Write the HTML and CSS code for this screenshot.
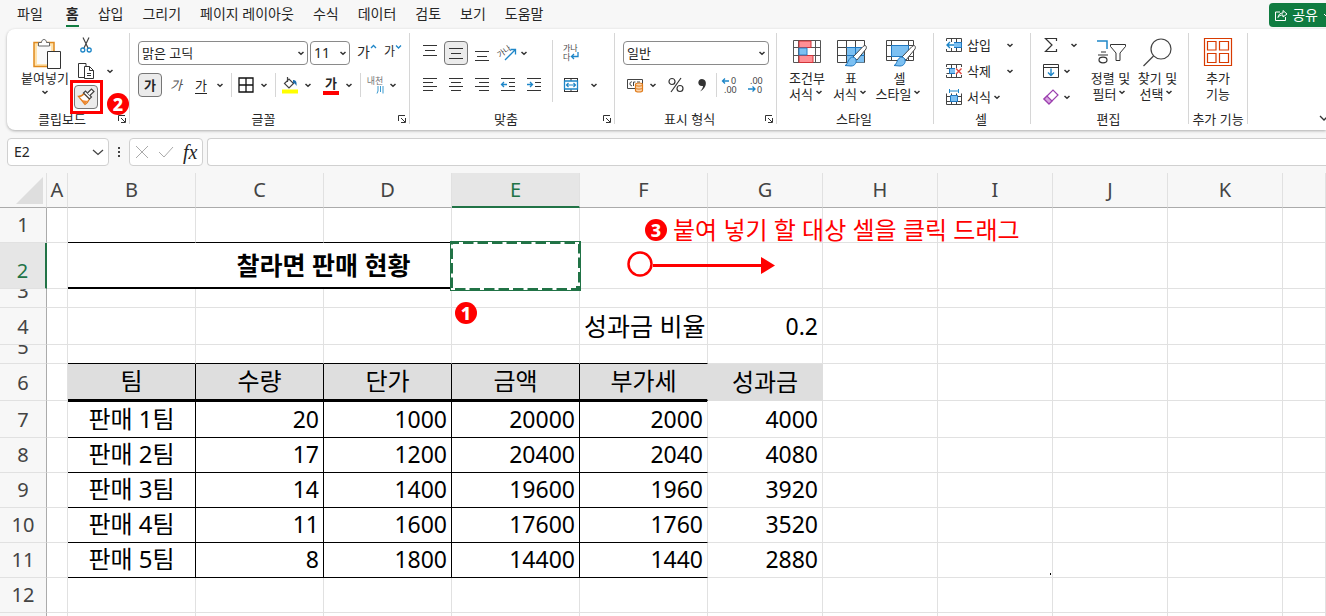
FILE: index.html
```html
<!DOCTYPE html>
<html lang="ko">

<head>
    <meta charset="UTF-8">
    <title>Excel</title>
    <link rel="stylesheet" href="styles.css">
</head>

<body>
    <svg class="symbols">
        <symbol id="chev" viewBox="0 0 12 12"><path d="M3.5 5L6 7.3L8.5 5" fill="none" stroke="#333" stroke-width="1.5"/></symbol>
        <symbol id="launch" viewBox="0 0 10 10"><path d="M1.5 7V1.5H8M4 4L8 8M8.5 4V8.5H4" fill="none" stroke="#333"/></symbol>
    </svg>

    <nav class="menu">
        <a href="#">파일</a>
        <a href="#" class="active">홈</a>
        <a href="#">삽입</a>
        <a href="#">그리기</a>
        <a href="#">페이지 레이아웃</a>
        <a href="#">수식</a>
        <a href="#">데이터</a>
        <a href="#">검토</a>
        <a href="#">보기</a>
        <a href="#">도움말</a>
        <button class="share">
            <svg width="14" height="14" viewBox="0 0 14 14"><path d="M6 4H1.5V12.5H11.5V9M4 9.5C4.5 6.5 6 5 9 5V2.5L13 6L9 9V7C6.500 7 5 7.500 4 9.500Z" fill="none" stroke="#fff"/></svg>
            공유
            <svg width="12" height="12" viewBox="0 0 12 12"><path d="M2 5L5 8L8 5" fill="none" stroke="#fff"/></svg>
        </button>
    </nav>

    <div class="ribbon">
        <!-- clipboard -->
        <section class="group clipboard">
            <div class="tools">
                <button class="big">
                    <svg width="34" height="32" viewBox="-4 0 34 32">
                        <path d="M2 4.500H22V28.500H2Z" fill="#ffe2ac" stroke="#e08a1e" stroke-width="1.500"/>
                        <path d="M5 8H19V26H5Z" fill="#fafafa"/>
                        <path d="M6.500 8V4.500H9.500C9.500 0.500 14.500 0.500 14.500 4.500H17.500V8Z" fill="#fff" stroke="#666"/>
                        <path d="M15.500 13.500H28.500V30.500H15.500Z" fill="#fff" stroke="#333"/>
                    </svg>
                    <span>붙여넣기</span>
                    <svg class="chev"><use href="#chev"/></svg>
                </button>
                <div class="stack">
                    <button class="tool" aria-label="잘라내기">
                        <svg width="18" height="18" viewBox="0 0 18 18"><path d="M6 1.500L11.500 13M12 1.500L6.500 13" fill="none" stroke="#444" stroke-width="1.200"/><circle cx="5.800" cy="14" r="2" fill="none" stroke="#1e86c8" stroke-width="1.300"/><circle cx="12.200" cy="14" r="2" fill="none" stroke="#1e86c8" stroke-width="1.300"/></svg>
                    </button>
                    <div class="row">
                        <button class="tool" aria-label="복사">
                            <svg width="18" height="18" viewBox="0 0 18 18"><path d="M7 15.500H1.500V1.500H9V4" fill="none" stroke="#333"/><path d="M7.500 4.500H12.500L16.500 8.500V16.500H7.500ZM12.500 4.500V8.500H16.500M10 11.500H14M10 13.500H14" fill="#fff" stroke="#333"/></svg>
                        </button>
                        <svg class="chev"><use href="#chev"/></svg>
                    </div>
                    <div class="painter">
                        <button class="tool on" aria-label="서식 복사">
                            <svg width="18" height="18" viewBox="0 0 18 18"><path d="M1.500 8.500C4 8.500 5.500 7.500 7 5.500L12.500 11C11.500 13 10.500 15 8 16.500Z" fill="#fff" stroke="#e07b1a" stroke-width="1.300"/><path d="M3 10.500C6 12.500 8 13 11 12.500L8 16Z" fill="#ef8a35"/><path d="M6.500 5L8.500 3L14.500 9L12.500 11Z" fill="#fff" stroke="#444" stroke-width="1.200"/><path d="M10.500 5L14.500 1L17 3.500L12.800 7.500" fill="#fff" stroke="#444" stroke-width="1.200"/></svg>
                        </button>
                        <span class="frame"></span>
                        <span class="badge">2</span>
                    </div>
                </div>
            </div>
            <div class="caption"><span>클립보드</span><svg class="launch"><use href="#launch"/></svg></div>
        </section>

        <!-- font -->
        <section class="group font">
            <div class="tools rows">
                <div class="row">
                    <span class="pick family"><select aria-label="글꼴"><option>맑은 고딕</option></select><svg class="chev"><use href="#chev"/></svg></span>
                    <span class="pick size"><select aria-label="글꼴 크기"><option>11</option></select><svg class="chev"><use href="#chev"/></svg></span>
                    <button class="tool step" aria-label="글꼴 크기 크게">가<svg width="7" height="6" viewBox="0 0 7 6"><path d="M1 4L3.500 1.500L6 4" fill="none" stroke="#1e86c8" stroke-width="1.300"/></svg></button>
                    <button class="tool step small" aria-label="글꼴 크기 작게">가<svg width="7" height="6" viewBox="0 0 7 6"><path d="M1 1.500L3.500 4L6 1.500" fill="none" stroke="#1e86c8" stroke-width="1.300"/></svg></button>
                </div>
                <div class="row">
                    <button class="tool on bold" aria-label="굵게">가</button>
                    <button class="tool italic" aria-label="기울임꼴">가</button>
                    <button class="tool underline" aria-label="밑줄">가</button>
                    <svg class="chev"><use href="#chev"/></svg>
                    <i class="sep"></i>
                    <button class="tool" aria-label="테두리"><svg width="16" height="16" viewBox="0 0 16 16"><path d="M1 1H15V15H1ZM8 1V15M1 8H15" fill="none" stroke="#111" stroke-width="1.300"/></svg></button>
                    <svg class="chev"><use href="#chev"/></svg>
                    <i class="sep"></i>
                    <button class="tool" aria-label="채우기 색"><svg width="18" height="18" viewBox="0 0 18 18"><path d="M1 13.500H17V17.500H1Z" fill="#ff0"/><path d="M3.500 7.500L8 3L12.500 7.500L8 12ZM6.500 1V6" fill="#fff" stroke="#444" stroke-width="1.200"/><path d="M12 4C15 4 16 6 15.500 10C14.500 8 13.500 7 12 7Z" fill="#1e6fae"/></svg></button>
                    <svg class="chev"><use href="#chev"/></svg>
                    <button class="tool color" aria-label="글꼴 색">가</button>
                    <svg class="chev"><use href="#chev"/></svg>
                    <i class="sep"></i>
                    <button class="tool ruby" aria-label="윗주"><span>내천</span><svg width="8" height="8" viewBox="0 0 8 8"><path d="M2 0V5L1 7.500M4.500 0V6M7 0V7.500" fill="none" stroke="#3a9ad0"/></svg></button>
                    <svg class="chev"><use href="#chev"/></svg>
                </div>
            </div>
            <div class="caption"><span>글꼴</span><svg class="launch"><use href="#launch"/></svg></div>
        </section>

        <!-- alignment -->
        <section class="group align">
            <div class="tools">
                <div class="rows">
                    <div class="row tight">
                        <button class="tool" aria-label="위쪽 맞춤"><svg width="16" height="16" viewBox="0 0 16 16"><path d="M1 0.500H15M3 5.500H13M1 10.500H15" stroke="#333"/></svg></button>
                        <button class="tool on" aria-label="가운데 맞춤"><svg width="16" height="16" viewBox="0 0 16 16"><path d="M1 3.500H15M3 8.500H13M1 13.500H15" stroke="#333"/></svg></button>
                        <button class="tool" aria-label="아래쪽 맞춤"><svg width="16" height="16" viewBox="0 0 16 16"><path d="M1 6.500H15M3 11.500H13M1 15.500H15" stroke="#333"/></svg></button>
                        <button class="tool" aria-label="방향"><svg width="18" height="18" viewBox="0 0 18 18"><text x="-2" y="11" class="tiny" transform="rotate(-35 4 8)">가나</text><path d="M6 16L16 6M11.500 5.500H16.500V10.500" fill="none" stroke="#1e86c8" stroke-width="1.300"/></svg></button>
                        <svg class="chev"><use href="#chev"/></svg>
                    </div>
                    <div class="row tight">
                        <button class="tool" aria-label="왼쪽 맞춤"><svg width="16" height="16" viewBox="0 0 16 16"><path d="M1 1.500H15M1 5.500H11M1 9.500H15M1 13.500H11" stroke="#333"/></svg></button>
                        <button class="tool" aria-label="가운데 맞춤"><svg width="16" height="16" viewBox="0 0 16 16"><path d="M1 1.500H15M3 5.500H13M1 9.500H15M3 13.500H13" stroke="#333"/></svg></button>
                        <button class="tool" aria-label="오른쪽 맞춤"><svg width="16" height="16" viewBox="0 0 16 16"><path d="M1 1.500H15M5 5.500H15M1 9.500H15M5 13.500H15" stroke="#333"/></svg></button>
                        <button class="tool" aria-label="내어쓰기"><svg width="16" height="16" viewBox="0 0 16 16"><path d="M1 1.500H15M9 5.500H15M9 9.500H15M1 13.500H15" stroke="#333"/><path d="M7 7.500H1.500M4 5L1.500 7.500L4 10" fill="none" stroke="#1e86c8" stroke-width="1.300"/></svg></button>
                        <button class="tool" aria-label="들여쓰기"><svg width="16" height="16" viewBox="0 0 16 16"><path d="M1 1.500H15M9 5.500H15M9 9.500H15M1 13.500H15" stroke="#333"/><path d="M1 7.500H6.500M4 5L6.500 7.500L4 10" fill="none" stroke="#1e86c8" stroke-width="1.300"/></svg></button>
                    </div>
                </div>
                <i class="sep tall"></i>
                <div class="rows">
                    <div class="row">
                        <button class="tool" aria-label="텍스트 줄 바꿈"><svg width="18" height="18" viewBox="0 0 18 18"><text x="1" y="7" class="tiny">가나</text><text x="1" y="16" class="tiny">다</text><path d="M16 8V12.500H9.500M12 10L9.500 12.500L12 15" fill="none" stroke="#1e86c8" stroke-width="1.300"/></svg></button>
                    </div>
                    <div class="row">
                        <button class="tool" aria-label="병합하고 가운데 맞춤"><svg width="16" height="16" viewBox="0 0 16 16"><path d="M1.500 1V15M14.500 1V15M1 1.500H15M1 14.500H15M8 1V4M8 12V15" stroke="#333"/><path d="M1.500 4H14.500V12H1.500Z" fill="#fff" stroke="#1e86c8" stroke-width="1.300"/><path d="M3.500 8H12.500M5.500 6L3.500 8L5.500 10M10.500 6L12.500 8L10.500 10" fill="none" stroke="#1e86c8" stroke-width="1.200"/></svg></button>
                        <svg class="chev far"><use href="#chev"/></svg>
                    </div>
                </div>
            </div>
            <div class="caption"><span>맞춤</span><svg class="launch"><use href="#launch"/></svg></div>
        </section>

        <!-- number format -->
        <section class="group number">
            <div class="tools rows">
                <div class="row">
                    <span class="pick format"><select aria-label="표시 형식"><option>일반</option></select><svg class="chev"><use href="#chev"/></svg></span>
                </div>
                <div class="row">
                    <button class="tool" aria-label="회계 표시 형식"><svg width="18" height="16" viewBox="0 0 18 16"><path d="M1.500 2.500H16.500V11.500H1.500Z" fill="#fff" stroke="#444"/><path d="M6 5C3.500 4 3 9 6 8.800M7.500 9V5H9.500M11 5H14" fill="none" stroke="#444"/><path d="M9.500 7.500C9.500 5.500 16.500 5.500 16.500 7.500V13.500C16.500 15.500 9.500 15.500 9.500 13.500Z" fill="#fbd5ae" stroke="#e07b1a" stroke-width="1.200"/><path d="M9.500 8C10 9.500 16 9.500 16.500 8M9.500 11C10 12.500 16 12.500 16.500 11" fill="none" stroke="#e07b1a"/></svg></button>
                    <svg class="chev"><use href="#chev"/></svg>
                    <button class="tool gap" aria-label="백분율"><svg width="16" height="16" viewBox="0 0 16 16"><path d="M3 15L13 1" stroke="#333" stroke-width="1.200"/><circle cx="4" cy="4.500" r="3" fill="none" stroke="#333" stroke-width="1.200"/><circle cx="12" cy="11.500" r="3" fill="none" stroke="#333" stroke-width="1.200"/></svg></button>
                    <button class="tool" aria-label="쉼표"><svg width="10" height="14" viewBox="0 0 10 14"><path d="M5 1C10.500 1 10.500 10 3 13.500C5 11.500 6 9.500 6 8C0 9 0 1 5 1Z" fill="#333"/></svg></button>
                    <i class="sep"></i>
                    <button class="tool" aria-label="자릿수 늘림"><svg width="18" height="18" viewBox="0 0 18 18"><path d="M8 5H1.500M4 2.500L1.500 5L4 7.500" fill="none" stroke="#1e86c8" stroke-width="1.300"/><text x="10" y="8" class="tiny digit">0</text><text x="3" y="17" class="tiny digit">.00</text></svg></button>
                    <button class="tool" aria-label="자릿수 줄임"><svg width="18" height="18" viewBox="0 0 18 18"><path d="M1 13H8M5.500 10.500L8 13L5.500 15.500" fill="none" stroke="#1e86c8" stroke-width="1.300"/><text x="3" y="8" class="tiny digit">.00</text><text x="10" y="17" class="tiny digit">0</text></svg></button>
                </div>
            </div>
            <div class="caption"><span>표시 형식</span><svg class="launch"><use href="#launch"/></svg></div>
        </section>

        <!-- styles -->
        <section class="group styles">
            <div class="tools">
                <button class="big">
                    <svg width="32" height="28" viewBox="0 0 32 28"><path d="M2.500 2.500H29.500V24.500H2.500ZM2.500 9.500H29.500M2.500 17.500H29.500M7.500 2.500V24.500M24.500 2.500V24.500" fill="#fff" stroke="#555"/><path d="M8 3H20V9.500H8ZM8 17.500H22V24.500H8Z" fill="#ff8f95" stroke="#d13438"/><path d="M8 10H16V17H8Z" fill="#7cc0f2" stroke="#2b7fc4"/></svg>
                    <span>조건부</span>
                    <span>서식<svg class="chev"><use href="#chev"/></svg></span>
                </button>
                <button class="big">
                    <svg width="32" height="28" viewBox="0 0 32 28"><path d="M2.500 2.500H29.500V24.500H2.500ZM2.500 9.500H29.500M2.500 17.500H29.500M11.500 2.500V24.500M20.500 2.500V24.500" fill="#fff" stroke="#444"/><path d="M12 10H29V24.500H12Z" fill="#7cc0f2"/><path d="M11.500 17.500H29.500M20.500 9.500V24.500M11.500 9.500H29.500" stroke="#1e78c2"/><path d="M18 19L28 8.500C31 6 32 9 31 11L22 22Z" fill="#fff" stroke="#444"/><path d="M10 27.500C13 27 13 19 18 19C23 20 22 28 16 28Z" fill="#7cc0f2" stroke="#1e78c2"/></svg>
                    <span>표</span>
                    <span>서식<svg class="chev"><use href="#chev"/></svg></span>
                </button>
                <button class="big">
                    <svg width="32" height="28" viewBox="0 0 32 28"><path d="M2.500 2.500H29.500V22.500H2.500ZM2.500 7.500H29.500M2.500 18.500H29.500M7.500 2.500V22.500M24.500 2.500V22.500" fill="#fff" stroke="#444"/><path d="M7.500 7.500H24.500V18.500H7.500Z" fill="#7cc0f2" stroke="#1e78c2"/><path d="M18 19L28 8.500C31 6 32 9 31 11L22 22Z" fill="#fff" stroke="#444"/><path d="M10 27.500C13 27 13 19 18 19C23 20 22 28 16 28Z" fill="#7cc0f2" stroke="#1e78c2"/></svg>
                    <span>셀</span>
                    <span>스타일<svg class="chev"><use href="#chev"/></svg></span>
                </button>
            </div>
            <div class="caption"><span>스타일</span></div>
        </section>

        <!-- cells -->
        <section class="group cells">
            <div class="tools stack">
                <button class="line wide">
                    <svg width="16" height="16" viewBox="0 0 16 16"><path d="M0.500 4V1.500H15.500V14.500H0.500V12M5.500 1.500V14.500M10.500 1.500V14.500M0.500 5.500H15.500M0.500 10.500H15.500" fill="none" stroke="#444"/><path d="M6 5.500H15.500V10.500H6Z" fill="#7cc0f2" stroke="#1e78c2"/><path d="M0 5H8V11H0Z" fill="#fff"/><path d="M8 8H1M4 5L1 8L4 11" fill="none" stroke="#1e86c8" stroke-width="1.400"/></svg>
                    <span>삽입</span><svg class="chev"><use href="#chev"/></svg>
                </button>
                <button class="line wide">
                    <svg width="16" height="16" viewBox="0 0 16 16"><path d="M0.500 4V1.500H15.500V4M0.500 12V14.500H15.500V12M5.500 1.500V14.500M10.500 1.500V14.500M0.500 5.500H8M0.500 10.500H8" fill="none" stroke="#444"/><path d="M3.500 5.500H9.500V10.500H3.500Z" fill="#7cc0f2" stroke="#1e78c2"/><path d="M9 5H16V11H9Z" fill="#fff"/><path d="M10 5.500L15.500 11M15.500 5.500L10 11" stroke="#e0443c" stroke-width="1.400"/></svg>
                    <span>삭제</span><svg class="chev"><use href="#chev"/></svg>
                </button>
                <button class="line">
                    <svg width="16" height="16" viewBox="0 0 16 16"><path d="M0.500 4.500V15.500H15.500V4.500M5.500 4.500V15.500M10.500 4.500V15.500M0.500 7.500H15.500M0.500 12.500H15.500" fill="none" stroke="#444"/><path d="M4.500 6.500H11.500V12.500H4.500Z" fill="#7cc0f2" stroke="#1e78c2"/><path d="M3.500 0V4M12.500 0V4M3.500 2H12.500" stroke="#1e86c8"/></svg>
                    <span>서식</span><svg class="chev"><use href="#chev"/></svg>
                </button>
            </div>
            <div class="caption"><span>셀</span></div>
        </section>

        <!-- editing -->
        <section class="group edit">
            <div class="tools">
                <div class="stack">
                    <button class="line sum" aria-label="합계"><svg width="16" height="16" viewBox="0 0 16 16"><path d="M13.500 4V1.500H2.500L9 8L2.500 14.500H13.500V12" fill="none" stroke="#333" stroke-width="1.200"/></svg><svg class="chev"><use href="#chev"/></svg></button>
                    <button class="line" aria-label="채우기"><svg width="16" height="16" viewBox="0 0 16 16"><path d="M0.500 1.500H15.500V14.500H0.500ZM0.500 4.500H15.500" fill="none" stroke="#333"/><path d="M8 5.500V12M5 9.500L8 12.500L11 9.500" fill="none" stroke="#1e86c8" stroke-width="1.400"/></svg><svg class="chev"><use href="#chev"/></svg></button>
                    <button class="line" aria-label="지우기"><svg width="16" height="16" viewBox="0 0 16 16"><path d="M1 10L10 1L15 6L6 15Z" fill="#fff" stroke="#9b3fae" stroke-width="1.200"/><path d="M1 10L4 7L9 12L6 15Z" fill="#d9a3e0" stroke="#9b3fae" stroke-width="1.200"/></svg><svg class="chev"><use href="#chev"/></svg></button>
                </div>
                <button class="big">
                    <svg width="32" height="28" viewBox="0 0 32 28"><path d="M2 3H12V11" fill="none" stroke="#1e86c8" stroke-width="1.500"/><path d="M6 14H11M3 17H13" stroke="#333" stroke-width="1.200"/><ellipse cx="8" cy="22" rx="4" ry="2.800" fill="none" stroke="#333" stroke-width="1.200"/><path d="M15.500 6.500H30.500V8.500L25 15V22.500H21V15L15.500 8.500Z" fill="none" stroke="#333"/></svg>
                    <span>정렬 및</span>
                    <span>필터<svg class="chev"><use href="#chev"/></svg></span>
                </button>
                <button class="big">
                    <svg width="32" height="28" viewBox="0 0 32 28"><circle cx="19" cy="11" r="10" fill="none" stroke="#444" stroke-width="1.200"/><path d="M11.500 18L1.500 28" stroke="#444" stroke-width="1.300"/></svg>
                    <span>찾기 및</span>
                    <span>선택<svg class="chev"><use href="#chev"/></svg></span>
                </button>
            </div>
            <div class="caption"><span>편집</span></div>
        </section>

        <!-- add-ins -->
        <section class="group addins">
            <div class="tools">
                <button class="big">
                    <svg width="32" height="28" viewBox="0 0 32 28"><path d="M2.500 0.500H29.500V27.500H2.500ZM5.500 3.500H14V12H5.500ZM17.500 3.500H26.500V12H17.500ZM5.500 15.500H14V24.500H5.500ZM17.500 15.500H26.500V24.500H17.500Z" fill="none" stroke="#d83b01" stroke-width="1.200"/></svg>
                    <span>추가</span>
                    <span>기능</span>
                </button>
            </div>
            <div class="caption"><span>추가 기능</span></div>
        </section>
        <button class="collapse" aria-label="리본 축소"><svg width="12" height="12" viewBox="0 0 12 12"><path d="M2 4L6 8L10 4" fill="none" stroke="#333" stroke-width="1.300"/></svg></button>
    </div>

    <div class="formula">
        <div class="namebox">
            <input type="text" value="E2" aria-label="이름 상자">
            <svg width="12" height="12" viewBox="0 0 12 12"><path d="M1 4L6 8.500L11 4" fill="none" stroke="#444" stroke-width="1.300"/></svg>
        </div>
        <svg class="dots" width="4" height="12" viewBox="0 0 4 12"><path d="M1 1H3V3H1ZM1 5H3V7H1ZM1 9H3V11H1Z" fill="#444"/></svg>
        <div class="fx">
            <svg width="14" height="14" viewBox="0 0 14 14"><path d="M1 1L13 13M13 1L1 13" stroke="#aaa"/></svg>
            <svg width="16" height="14" viewBox="0 0 16 14"><path d="M1 7L6 12L15 2" fill="none" stroke="#aaa"/></svg>
            <span>fx</span>
        </div>
        <input type="text" class="bar" aria-label="수식 입력줄">
    </div>

    <div class="sheet">
        <table>
            <colgroup>
                <col class="c-head"><col class="c-a">
                <col class="c-b"><col class="c-b"><col class="c-b"><col class="c-b"><col class="c-b">
                <col class="c-g"><col class="c-g"><col class="c-g"><col class="c-g"><col class="c-g">
                <col>
            </colgroup>
            <thead>
                <tr>
                    <th class="corner"><svg width="27" height="27" viewBox="0 0 27 27"><path d="M27 0V27H0Z" fill="#dedede"/></svg></th>
                    <th>A</th><th>B</th><th>C</th><th>D</th><th class="sel">E</th><th>F</th><th>G</th><th>H</th><th>I</th><th>J</th><th>K</th><th></th>
                </tr>
            </thead>
            <tbody>
                <tr class="r35"><th>1</th><td></td><td class="bb"></td><td class="bb"></td><td class="bb"></td><td class="bb"></td><td></td><td></td><td></td><td></td><td></td><td></td><td></td></tr>
                <tr class="r46">
                    <th class="sel">2</th><td></td>
                    <td colspan="4" class="title">찰라면 판매 현황
                        <svg class="marquee" width="131" height="50" viewBox="0 0 131 50"><path d="M1.500 1.500H129.500V48.500H1.500Z" fill="none" stroke="#217346" stroke-width="3"/><path d="M2 2H129V48H2Z" fill="none" stroke="#fff" stroke-width="2" stroke-dasharray="4 10.500" stroke-dashoffset="-7"/><path d="M126 45H131V50H126Z" fill="#217346"/></svg>
                    </td>
                    <td></td><td></td><td></td><td></td><td></td><td></td><td></td>
                </tr>
                <tr class="r19"><th><div class="clip">3</div></th><td></td><td></td><td></td><td></td><td></td><td></td><td></td><td></td><td></td><td></td><td></td><td></td></tr>
                <tr class="r37"><th>4</th><td></td><td></td><td></td><td></td><td></td><td class="text">성과금 비율</td><td>0.2</td><td></td><td></td><td></td><td></td><td></td></tr>
                <tr class="r19"><th><div class="clip">5</div></th><td></td><td class="bb"></td><td class="bb"></td><td class="bb"></td><td class="bb"></td><td class="bb"></td><td></td><td></td><td></td><td></td><td></td><td></td></tr>
                <tr class="r37 heads"><th>6</th><td></td><td class="box">팀</td><td class="box">수량</td><td class="box">단가</td><td class="box">금액</td><td class="box last">부가세</td><td class="plain">성과금</td><td></td><td></td><td></td><td></td><td></td></tr>
                <tr class="r37 first"><th>7</th><td></td><td class="box team">판매 1팀</td><td class="box">20</td><td class="box">1000</td><td class="box">20000</td><td class="box last">2000</td><td>4000</td><td></td><td></td><td></td><td></td><td></td></tr>
                <tr class="r35"><th>8</th><td></td><td class="box team">판매 2팀</td><td class="box">17</td><td class="box">1200</td><td class="box">20400</td><td class="box last">2040</td><td>4080</td><td></td><td></td><td></td><td></td><td></td></tr>
                <tr class="r35"><th>9</th><td></td><td class="box team">판매 3팀</td><td class="box">14</td><td class="box">1400</td><td class="box">19600</td><td class="box last">1960</td><td>3920</td><td></td><td></td><td></td><td></td><td></td></tr>
                <tr class="r35"><th>10</th><td></td><td class="box team">판매 4팀</td><td class="box">11</td><td class="box">1600</td><td class="box">17600</td><td class="box last">1760</td><td>3520</td><td></td><td></td><td></td><td></td><td></td></tr>
                <tr class="r35"><th>11</th><td></td><td class="box team">판매 5팀</td><td class="box">8</td><td class="box">1800</td><td class="box">14400</td><td class="box last">1440</td><td>2880</td><td></td><td></td><td></td><td></td><td></td></tr>
                <tr class="r35"><th>12</th><td></td><td></td><td></td><td></td><td></td><td></td><td></td><td></td><td></td><td></td><td></td><td></td></tr>
                <tr class="r35"><th></th><td></td><td></td><td></td><td></td><td></td><td></td><td></td><td></td><td></td><td></td><td></td><td></td></tr>
            </tbody>
        </table>

        <!-- step notes over the cells -->
        <span class="badge step1">1</span>
        <div class="note"><span class="badge">3</span>붙여 넣기 할 대상 셀을 클릭 드래그</div>
        <svg class="drag" width="150" height="28" viewBox="0 0 150 28"><circle cx="14" cy="14" r="11.500" fill="#fff" stroke="#f00" stroke-width="2.500"/><path d="M27 14H136V17H27Z" fill="#f00"/><path d="M135 7L149 15.500L135 24Z" fill="#f00"/></svg>
        <i class="speck"></i>
    </div>
</body>

</html>
```
FILE: styles.css
```css
* {
    box-sizing: border-box;
}

body {
    margin: 0;
    height: 100vh;
    overflow: hidden;
    display: flex;
    flex-direction: column;
    background-color: #f7f7f7;
    font-family: "Noto Sans", "Noto Sans CJK KR", sans-serif;
    font-size: 13px;
    line-height: 16px;
    color: #262626;
}

button,
input,
select {
    font: inherit;
    color: inherit;
    border: none;
    background: none;
    padding: 0;
    margin: 0;
}

svg {
    display: block;
    flex: none;
    overflow: visible;
}

.symbols {
    position: absolute;
    width: 0;
    height: 0;
}

.chev {
    width: 12px;
    height: 12px;
}

.launch {
    width: 10px;
    height: 10px;
}

.tiny {
    font-size: 8px;
    fill: #444;
}

.digit {
    font-size: 9px;
}

/* menu */
.menu {
    flex: none;
    display: flex;
    align-items: center;
    gap: 19px;
    height: 29px;
    padding-left: 17px;
    font-size: 14px;
    overflow: hidden;
}

.menu a {
    flex: none;
    color: #262626;
    text-decoration: none;
    line-height: 22px;
    border-bottom: 2px solid transparent;
}

.menu a.active {
    margin-left: 4px;
    font-weight: bold;
    border-color: #107c41;
}

.share {
    flex: none;
    display: flex;
    align-items: center;
    gap: 4px;
    height: 24px;
    margin: 0 -8px 0 auto;
    padding: 0 0 0 5px;
    border-radius: 4px;
    background-color: #107c41;
    color: #fff;
}

/* ribbon */
.ribbon {
    flex: none;
    display: flex;
    height: 101px;
    margin: 0 0 8px 7px;
    padding: 4px 0 6px;
    border-radius: 8px 0 0 8px;
    background-color: #fff;
    box-shadow: 0 1px 3px rgba(0, 0, 0, 0.3);
}

.group {
    flex: none;
    display: flex;
    flex-direction: column;
    justify-content: space-between;
    border-right: 1px solid #d6d6d6;
}

.clipboard {
    width: 123px;
}

.font {
    width: 280px;
}

.align {
    width: 205px;
}

.number {
    width: 162px;
}

.styles {
    width: 157px;
}

.cells {
    width: 97px;
}

.edit {
    width: 158px;
}

.addins {
    width: 59px;
}

.tools {
    display: flex;
    padding-left: 8px;
}

.caption {
    display: flex;
    align-items: center;
    height: 10px;
    padding-right: 2px;
}

.caption span {
    flex: 1;
    text-align: center;
}

.rows {
    display: flex;
    flex-direction: column;
    gap: 8px;
    padding-top: 8px;
}

.row {
    display: flex;
    align-items: center;
    height: 24px;
}

.tight {
    gap: 2px;
}

.tight .chev {
    margin-left: -4px;
}

.tool {
    flex: none;
    display: flex;
    align-items: center;
    justify-content: center;
    width: 24px;
    height: 24px;
}

.tool.on {
    border: 1px solid #767676;
    border-radius: 4px;
    background-color: #ebebeb;
}

.sep {
    flex: none;
    width: 1px;
    height: 24px;
    margin: 0 2px 0 5px;
    background-color: #d6d6d6;
}

.sep.tall {
    height: 62px;
    margin: 7px 6px 0;
}

.far {
    margin-left: 5px;
}

.gap {
    margin-left: 5px;
}

.number .gap,
.number .gap + .tool {
    margin-right: 2px;
}

.number .sep {
    margin: 0 1px 0 0;
}

.number .sep + .tool {
    margin-right: 2px;
}

.stack {
    display: flex;
    flex-direction: column;
    gap: 2px;
}

.big {
    display: flex;
    flex-direction: column;
    align-items: center;
    flex: none;
    white-space: nowrap;
}

.big span {
    display: flex;
    align-items: center;
}

/* clipboard */
.clipboard .tools {
    padding-left: 14px;
}

.clipboard .big {
    width: 48px;
    padding-top: 5px;
}

.clipboard .stack {
    margin-left: 5px;
}

.clipboard .stack .row .chev {
    margin-left: 6px;
}

.painter {
    position: relative;
    width: 24px;
}

.frame {
    position: absolute;
    left: -4px;
    top: -5px;
    width: 33px;
    height: 34px;
    border: 3px solid #f00;
}

.badge {
    display: flex;
    align-items: center;
    justify-content: center;
    width: 22px;
    height: 22px;
    border-radius: 50%;
    background-color: #f00;
    color: #fff;
    font-size: 18px;
    font-weight: 800;
    line-height: 22px;
}

.painter .badge {
    position: absolute;
    left: 33px;
    top: 8px;
}

/* font */
.pick {
    position: relative;
    height: 24px;
}

.pick select {
    width: 100%;
    height: 24px;
    padding: 0 14px 0 3px;
    border: 1px solid #8a8a8a;
    border-radius: 4px;
    background-color: #fff;
    appearance: none;
}

.pick .chev {
    position: absolute;
    right: 1px;
    top: 6px;
}

.family {
    width: 170px;
    margin-right: 2px;
}

.size {
    width: 40px;
    margin-right: 4px;
}

.size select {
    font-size: 14px;
}

.format {
    width: 146px;
}

.step {
    align-items: flex-start;
    width: 26px;
    padding-top: 3px;
    font-size: 14px;
}

.step.small {
    font-size: 12px;
}

.bold {
    font-weight: bold;
}

.italic {
    margin: 0 1px 0 2px;
    font-style: italic;
    color: #555;
}

.underline {
    margin-right: 1px;
    text-decoration: underline;
    text-underline-offset: 3px;
}

.color {
    height: 19px;
    width: 16px;
    margin: 0 4px 0 9px;
    font-weight: bold;
    border-bottom: 4px solid #f00;
}

.ruby {
    flex-direction: column;
    font-size: 9px;
    line-height: 10px;
    color: #777;
}

.ruby svg {
    align-self: flex-end;
    margin-right: 3px;
}

/* styles, cells, editing */
.styles .big,
.edit .big,
.addins .big {
    padding-top: 5px;
}

.styles .big svg:first-child,
.edit .big svg:first-child,
.addins .big svg:first-child {
    margin-bottom: 4px;
}

.styles .big {
    width: 44px;
}

.styles .big:last-child {
    width: 53px;
}

.cells .tools {
    padding-left: 12px;
}

.line {
    display: flex;
    align-items: center;
    height: 24px;
}

.line span {
    margin: 0 0 0 5px;
}

.line.wide span {
    margin-right: 13px;
}

.edit .tools {
    padding-left: 12px;
}

.edit .line .chev {
    margin-left: 2px;
}

.edit .line.sum .chev {
    margin-left: 9px;
}

.edit .big {
    width: 47px;
}

.edit .stack + .big {
    margin-left: 7px;
}

.addins .tools {
    justify-content: center;
    padding: 0;
}

.addins .caption {
    padding: 0;
    white-space: nowrap;
}

.collapse {
    margin: auto -4px 0 auto;
}

/* formula bar */
.formula {
    flex: none;
    display: flex;
    align-items: center;
    height: 28px;
    margin: 0 0 7px 7px;
}

.namebox,
.fx,
.bar {
    height: 28px;
    border: 1px solid #d0d0d0;
    border-radius: 4px;
    background-color: #fff;
}

.namebox {
    display: flex;
    align-items: center;
    width: 102px;
    padding: 0 4px 0 6px;
}

.namebox input {
    flex: 1;
    min-width: 0;
    font-size: 14px;
}

.dots {
    margin: 0 8px;
}

.fx {
    display: flex;
    align-items: center;
    gap: 9px;
    width: 74px;
    padding-left: 5px;
}

.fx span {
    font: italic 20px "Liberation Serif", serif;
}

.bar {
    flex: 1;
    margin-left: 4px;
    border-right: none;
    border-radius: 4px 0 0 4px;
}

/* sheet */
.sheet {
    position: relative;
    flex: 1;
    overflow: hidden;
}

table {
    width: 100%;
    table-layout: fixed;
    border-collapse: separate;
    border-spacing: 0;
    background-color: #fff;
    font-size: 23px;
    line-height: 30px;
    color: #000;
}

.c-head {
    width: 47px;
}

.c-a {
    width: 21px;
}

.c-b {
    width: 128px;
}

.c-g {
    width: 115px;
}

th {
    padding: 0 0 2px;
    border-right: 1px solid #e1e1e1;
    border-bottom: 1px solid #e1e1e1;
    background-color: #f7f7f7;
    color: #444;
    font-size: 20px;
    font-weight: normal;
    vertical-align: bottom;
}

thead th {
    height: 35px;
    border-bottom-color: #ababab;
}

tbody th {
    border-right-color: #ababab;
}

th.sel {
    background-color: #e6e6e6;
    color: #217346;
}

thead th.sel {
    padding-bottom: 1px;
    border-bottom: 2px solid #217346;
}

tbody th.sel {
    border-right: 2px solid #217346;
}

.corner svg {
    margin: 0 0 1px 16px;
}

td {
    padding: 0 4px 3px 0;
    border-right: 1px solid #e1e1e1;
    border-bottom: 1px solid #e1e1e1;
    text-align: right;
    vertical-align: bottom;
    white-space: nowrap;
}

.r35 {
    height: 35px;
}

.r37 {
    height: 37px;
}

.r46 {
    height: 46px;
}

.r19 {
    height: 19px;
}

.r19 th,
.r19 td {
    padding: 0;
}

/* short rows cut the top of their number */
.clip {
    display: flex;
    flex-direction: column;
    justify-content: flex-end;
    height: 18px;
    padding-bottom: 1px;
    overflow: hidden;
}

td.bb {
    border-bottom-color: #000;
}

td.title {
    position: relative;
    padding: 0 0 7px;
    border-bottom: 2px solid #000;
    font-size: 25px;
    font-weight: bold;
    text-align: center;
}

.marquee {
    position: absolute;
    right: -2px;
    top: -2px;
    background-color: #fff;
}

td.text {
    padding: 0 0 3px 4px;
    font-size: 25px;
    text-align: left;
}

td.box {
    border-color: #000;
}

td.last {
    border-right-color: #e1e1e1;
}

td.team {
    padding-right: 0;
    font-size: 24px;
    text-align: center;
}

.heads td {
    padding-right: 0;
    font-size: 24px;
    text-align: center;
}

.heads td.box {
    border-bottom-width: 2px;
    background-color: #dedede;
}

.heads td.last {
    border-right-color: #dedede;
}

.first td.box {
    box-shadow: inset 0 1px #000;
}

td.plain {
    border-color: #dedede;
    background-color: #dedede;
}

/* notes */
.step1 {
    position: absolute;
    left: 455px;
    top: 129px;
}

.note {
    position: absolute;
    left: 645px;
    top: 42px;
    display: flex;
    align-items: center;
    gap: 6px;
    color: #f00;
    font-size: 24px;
    line-height: 30px;
    white-space: nowrap;
}

.drag {
    position: absolute;
    left: 626px;
    top: 77px;
}

.speck {
    position: absolute;
    left: 1050px;
    top: 400px;
    width: 1px;
    height: 2px;
    background-color: #000;
}
```
